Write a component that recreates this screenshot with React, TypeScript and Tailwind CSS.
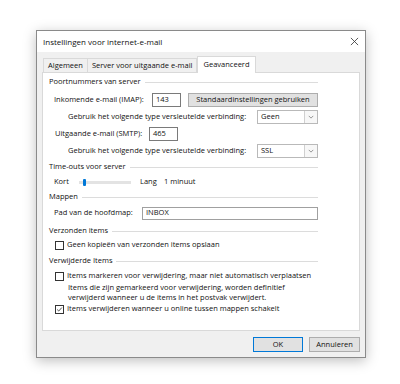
import type { ReactNode } from 'react'

function GroupHeader({ title }: { title: string }) {
  return (
    <div className="flex h-[12px] items-center pl-[6px] pr-[41px]">
      <span className="whitespace-nowrap">{title}</span>
      <div className="ml-[4px] h-px flex-1 bg-[#dcdcdc]" />
    </div>
  )
}

function Checkbox({ checked, children }: { checked?: boolean; children: ReactNode }) {
  return (
    <div className="flex h-[12px] items-center pl-[12px]">
      <div className="flex h-[9px] w-[9px] items-center justify-center border border-[#333] bg-white">
        {checked ? (
          <svg viewBox="0 0 9 9" className="h-[9px] w-[9px]">
            <path d="M1.5 4.5 L3.5 6.5 L7.5 2" fill="none" stroke="#222" strokeWidth="1" />
          </svg>
        ) : null}
      </div>
      <span className="ml-[3px] whitespace-nowrap">{children}</span>
    </div>
  )
}

function Combo({ value }: { value: string }) {
  return (
    <div className="flex h-[14px] w-[61px] items-center border border-[#b9b9b9] bg-white">
      <span className="flex-1 pl-[3px]">{value}</span>
      <div className="flex h-full w-[13px] items-center justify-center border-l border-[#d0d0d0] bg-[#f7f7f7]">
        <svg viewBox="0 0 8 8" className="h-[6px] w-[6px]">
          <path d="M1 2.5 L4 5.5 L7 2.5" fill="none" stroke="#777" strokeWidth="1" />
        </svg>
      </div>
    </div>
  )
}

export default function App() {
  return (
    <div className="h-[384px] w-[400px] bg-white pl-[36px] pt-[30px] text-[7.5px] leading-none text-[#111] [font-family:'Open_Sans','Noto_Sans',sans-serif]">
      <div className="flex h-[328px] w-[330px] flex-col border border-[#8a8a8a] bg-[#f0f0f0] shadow-[0_3px_12px_rgba(0,0,0,0.25)]">
        {/* title bar */}
        <div className="flex h-[21px] items-center justify-between bg-white pl-[6px] pr-[6px]">
          <span className="text-[8px]">Instellingen voor internet-e-mail</span>
          <svg viewBox="0 0 10 10" className="h-[9px] w-[9px]">
            <path d="M1 1 L9 9 M9 1 L1 9" stroke="#333" strokeWidth="0.9" />
          </svg>
        </div>

        {/* tabs */}
        <div className="mt-[4px] flex h-[16px] items-end pl-[6px]">
          <div className="flex h-[14px] items-center border border-b-0 border-[#d9d9d9] px-[4px]">Algemeen</div>
          <div className="flex h-[14px] items-center border border-b-0 border-l-0 border-[#d9d9d9] px-[4px]">Server voor uitgaande e-mail</div>
          <div className="relative z-10 -mb-px flex h-[17px] items-center border border-b-0 border-[#d9d9d9] bg-white px-[5px]">Geavanceerd</div>
        </div>

        {/* panel */}
        <div className="mx-[5px] flex h-[259px] flex-col border border-[#d9d9d9] bg-white">
          <div className="mt-[3px]">
            <GroupHeader title="Poortnummers van server" />
          </div>
          <div className="mt-[5px] flex h-[14px] items-center pl-[11px]">
            <span className="w-[98px] whitespace-nowrap">Inkomende e-mail (IMAP):</span>
            <div className="flex h-[14px] w-[29px] items-center border border-[#7a7a7a] bg-white pl-[3px]">143</div>
            <div className="ml-[7px] flex h-[14px] w-[130px] items-center justify-center border border-[#adadad] bg-[#e1e1e1]">
              Standaardinstellingen gebruiken
            </div>
          </div>
          <div className="mt-[3px] flex h-[14px] items-center pl-[25px]">
            <span className="w-[189px] whitespace-nowrap">Gebruik het volgende type versleutelde verbinding:</span>
            <Combo value="Geen" />
          </div>
          <div className="mt-[3px] flex h-[14px] items-center pl-[12px]">
            <span className="w-[94px] whitespace-nowrap">Uitgaande e-mail (SMTP):</span>
            <div className="flex h-[14px] w-[29px] items-center border border-[#7a7a7a] bg-white pl-[3px]">465</div>
          </div>
          <div className="mt-[3px] flex h-[14px] items-center pl-[25px]">
            <span className="w-[189px] whitespace-nowrap">Gebruik het volgende type versleutelde verbinding:</span>
            <Combo value="SSL" />
          </div>

          <div className="mt-[3px]">
            <GroupHeader title="Time-outs voor server" />
          </div>
          <div className="mt-[3px] flex h-[12px] items-center pl-[11px]">
            <span className="w-[25px]">Kort</span>
            <div className="relative h-[3px] w-[52px] bg-[#e3e3e3]">
              <div className="absolute left-[4px] top-[-2px] h-[7px] w-[3px] rounded-[1px] bg-[#0078d7]" />
            </div>
            <span className="ml-[9px] w-[24px]">Lang</span>
            <span>1 minuut</span>
          </div>

          <div className="mt-[3px]">
            <GroupHeader title="Mappen" />
          </div>
          <div className="mt-[3px] flex h-[14px] items-center pl-[11px]">
            <span className="w-[88px] whitespace-nowrap">Pad van de hoofdmap:</span>
            <div className="flex h-[13px] w-[176px] items-center border border-[#a0a0a0] bg-white pl-[3px]">INBOX</div>
          </div>

          <div className="mt-[5px]">
            <GroupHeader title="Verzonden items" />
          </div>
          <div className="mt-[2px]">
            <Checkbox>Geen kopieën van verzonden items opslaan</Checkbox>
          </div>

          <div className="mt-[4px]">
            <GroupHeader title="Verwijderde Items" />
          </div>
          <div className="mt-[3px]">
            <Checkbox>Items markeren voor verwijdering, maar niet automatisch verplaatsen</Checkbox>
          </div>
          <div className="mt-[1px] pl-[25px] leading-[9.5px]">
            Items die zijn gemarkeerd voor verwijdering, worden definitief
            <br />
            verwijderd wanneer u de items in het postvak verwijdert.
          </div>
          <div className="mt-[1px]">
            <Checkbox checked>Items verwijderen wanneer u online tussen mappen schakelt</Checkbox>
          </div>
        </div>

        {/* buttons */}
        <div className="mt-[6px] flex justify-end gap-[6px] pr-[5px]">
          <div className="flex h-[15px] w-[50px] items-center justify-center border border-[#0078d7] bg-[#e1e1e1]">OK</div>
          <div className="flex h-[15px] w-[51px] items-center justify-center border border-[#adadad] bg-[#e1e1e1]">Annuleren</div>
        </div>
      </div>
    </div>
  )
}
